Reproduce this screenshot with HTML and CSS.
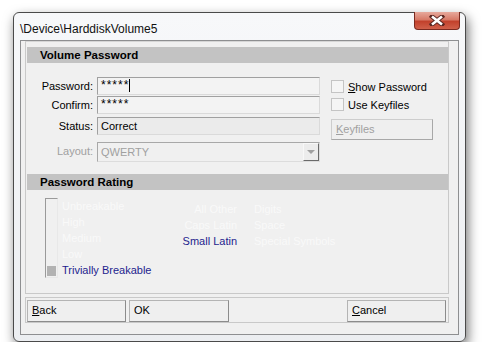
FILE: index.html
```html
<!DOCTYPE html>
<html>
<head>
<meta charset="utf-8">
<link rel="stylesheet" href="styles.css">
</head>
<body>
<div class="window">
  <div class="titlebar">
    <span class="title">\Device\HarddiskVolume5</span>
    <div class="close">
      <svg width="16" height="11" viewBox="0 0 16 11">
        <path d="M3 1.5 L13 9.5 M13 1.5 L3 9.5" stroke="#5a2620" stroke-width="4.4" stroke-linecap="square"/>
        <path d="M3 1.5 L13 9.5 M13 1.5 L3 9.5" stroke="#ffffff" stroke-width="2.6"/>
      </svg>
    </div>
  </div>
  <div class="client">
    <div class="panel">
      <div class="section-head">Volume Password</div>
      <div class="form">
        <div class="lbl">Password:</div>
        <div class="field pw">*****<span class="caret"></span></div>
        <div class="check c1"><span class="box"></span><span><u>S</u>how Password</span></div>

        <div class="lbl">Confirm:</div>
        <div class="field pw">*****</div>
        <div class="check c2"><span class="box"></span><span>Use Keyfiles</span></div>

        <div class="lbl">Status:</div>
        <div class="field status">Correct</div>
        <div class="btn disabled keyfiles"><u>K</u>eyfiles</div>

        <div class="lbl disabled">Layout:</div>
        <div class="combo"><span class="combo-text">QWERTY</span><span class="drop"><span class="tri"></span></span></div>
        <div></div>
      </div>
      <div class="section-head">Password Rating</div>
      <div class="rating">
        <div class="meter"><span class="fill"></span></div>
        <div class="levels">
          <div class="faint">Unbreakable</div>
          <div class="faint">High</div>
          <div class="faint">Medium</div>
          <div class="faint">Low</div>
          <div class="on">Trivially Breakable</div>
        </div>
        <div class="classes">
          <div class="faint r">All Other</div><div class="faint">Digits</div>
          <div class="faint r">Caps Latin</div><div class="faint">Space</div>
          <div class="on r">Small Latin</div><div class="faint">Special Symbols</div>
        </div>
      </div>
    </div>
    <div class="buttons">
      <div class="btn wide"><u>B</u>ack</div>
      <div class="btn wide">OK</div>
      <div class="btn wide cancel"><u>C</u>ancel</div>
    </div>
  </div>
</div>
</body>
</html>
```

FILE: styles.css
```css
html, body {
  margin: 0;
  padding: 0;
  background: #ffffff;
}
body {
  font-family: "Liberation Sans", Arial, sans-serif;
  font-size: 11px;
  color: #000;
}
.window {
  margin: 12px 0 0 13px;
  width: 451px;
  height: 328px;
  border: 1px solid #4a4a4a;
  border-radius: 6px;
  background: linear-gradient(#f7f8fa, #eceef1);
  box-shadow: 2px 5px 12px rgba(0,0,0,0.55);
  display: flex;
  flex-direction: column;
}
.titlebar {
  height: 27px;
  display: flex;
  align-items: flex-start;
  padding-left: 6px;
  padding-right: 5px;
}
.title {
  font-size: 12px;
  margin-top: 9px;
  color: #111;
}
.close {
  margin-left: auto;
  width: 44px;
  height: 17px;
  margin-top: -1px;
  border: 1px solid #7a2a20;
  border-top: none;
  border-radius: 0 0 4px 4px;
  background: linear-gradient(#e7a99c 0%, #d77a68 45%, #c2412c 55%, #d0604a 100%);
  display: flex;
  align-items: center;
  justify-content: center;
}
.client {
  margin: 0 6px;
  height: 293px;
  border: 1px solid #8e8f91;
  background: #f0f0f0;
  padding: 0 0 0 4px;
}
.panel {
  width: 422px;
  height: 246px;
  border: 1px solid #c9c9c9;
  border-top: 1px solid #d6d6d6;
  padding: 5px 0 0 0;
}
.section-head {
  margin: 0 0 0 1px;
  width: 421px;
  height: 16px;
  background: #c3c3c3;
  font-weight: bold;
  font-size: 11.5px;
  line-height: 16px;
  padding-left: 13px;
  box-sizing: border-box;
}
.form {
  margin-top: 14px;
  margin-bottom: 12px;
  display: grid;
  grid-template-columns: 67px 223px 113px;
  grid-template-rows: 19px 21px 25px 20px;
  column-gap: 4px;
}
.lbl {
  text-align: right;
  line-height: 18px;
  height: 18px;
}
.disabled { color: #a0a0a0; }
.field {
  height: 18px;
  box-sizing: border-box;
  border: 1px solid #dadada;
  border-top-color: #a0a0a0;
  border-left-color: #a0a0a0;
  background: #f3f3f3;
  padding-left: 3px;
  line-height: 15px;
  display: flex;
  align-items: flex-start;
}
.field.pw { font-size: 12px; line-height: 15px; letter-spacing: 1px; }
.field.status { background: #ebebeb; line-height: 16px; }
.caret {
  display: inline-block;
  width: 1px;
  height: 13px;
  background: #000;
  margin-left: 0;
  margin-top: 1px;
}
.check {
  display: flex;
  align-items: center;
  gap: 4px;
  padding-left: 7px;
  height: 13px;
}
.c1 { margin-top: 3px; }
.c2 { margin-top: 2px; }
.box {
  width: 11px;
  height: 11px;
  border: 1px solid #c4c4c4;
  background: #f5f5f5;
  flex: none;
}
.btn {
  box-sizing: border-box;
  border: 1px solid #b4b4b4;
  border-right-color: #8c8c8c;
  border-bottom-color: #8c8c8c;
  background: #efefef;
  padding-left: 4px;
  line-height: 19px;
}
.keyfiles {
  margin-left: 7px;
  margin-top: 2px;
  width: 102px;
  height: 21px;
  border-color: #cdcdcd;
  border-right-color: #a8a8a8;
  border-bottom-color: #a8a8a8;
}
.combo {
  height: 20px;
  box-sizing: border-box;
  border: 1px solid #dcdcdc;
  border-top-color: #a8a8a8;
  border-left-color: #a8a8a8;
  display: flex;
  align-items: stretch;
  background: #f0f0f0;
}
.combo-text {
  color: #a0a0a0;
  padding-left: 3px;
  line-height: 18px;
  flex: 1;
}
.drop {
  width: 16px;
  box-sizing: border-box;
  border: 1px solid #f8f8f8;
  border-right-color: #6a6a6a;
  border-bottom-color: #6a6a6a;
  background: #ececec;
  display: flex;
  align-items: center;
  justify-content: center;
}
.tri {
  width: 0;
  height: 0;
  border-left: 4px solid transparent;
  border-right: 4px solid transparent;
  border-top: 4px solid #a0a0a0;
}
.rating {
  margin-top: 8px;
  padding-left: 19px;
  display: flex;
  align-items: flex-start;
}
.meter {
  width: 13px;
  height: 80px;
  box-sizing: border-box;
  border: 1px solid #e8e8e8;
  border-top-color: #9a9a9a;
  border-left-color: #9a9a9a;
  display: flex;
  align-items: flex-end;
  padding: 0 1px 1px 1px;
}
.fill {
  display: block;
  width: 10px;
  height: 10px;
  background: #b2b2b2;
}
.levels {
  margin-left: 4px;
  width: 119px;
}
.levels div { height: 16px; line-height: 16px; }
.faint { color: #f9f9f9; }
.on { color: #1e1e8e; }
.classes {
  margin-top: 3px;
  display: grid;
  grid-template-columns: 56px auto;
  column-gap: 17px;
  grid-auto-rows: 16px;
  line-height: 16px;
  white-space: nowrap;
}
.r { text-align: right; }
.buttons {
  margin-top: 3px;
  width: 424px;
  box-sizing: border-box;
  border: 1px solid #c9c9c9;
  padding: 2px 2px 0 1px;
  display: flex;
  gap: 3px;
  height: 26px;
}
.btn.wide {
  width: 99px;
  height: 22px;
}
.btn.wide:nth-child(2) { width: 100px; }
.cancel { margin-left: auto; }
```
